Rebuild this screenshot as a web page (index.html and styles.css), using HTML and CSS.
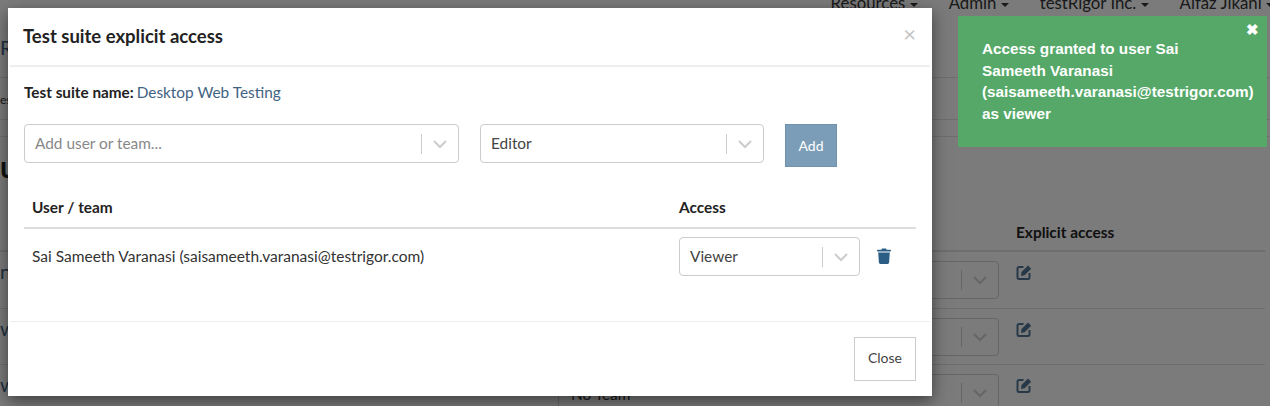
FILE: index.html
```html
<!DOCTYPE html>
<html>
<head>
  <title>Test suite explicit access</title>
  <link rel="stylesheet" href="styles.css">
</head>
<body>
  <div class="page">
    <nav class="top-nav">
      <span class="nav-item">Resources <i class="caret"></i></span>
      <span class="nav-item">Admin <i class="caret"></i></span>
      <span class="nav-item">testRigor Inc. <i class="caret"></i></span>
      <span class="nav-item nav-last">Alfaz Jikani <i class="caret"></i></span>
    </nav>
    <div class="page-link-row">R</div>
    <div class="page-tab-row">es</div>
    <div class="page-gap-row"></div>
    <h2 class="page-title">u</h2>
    <div class="page-table">
      <div class="page-head">
        <span></span>
        <span></span>
        <span>Explicit access</span>
      </div>
      <div class="page-row">
        <span class="page-name">n</span>
        <div class="page-select"><span class="sep"></span><svg class="chev" viewBox="0 0 20 20"><path d="M4 7l6 6 6-6"/></svg></div>
        <svg class="edit-icon" viewBox="0 0 16 16"><path d="M7.500 3H3a1.500 1.500 0 0 0-1.500 1.500v9A1.500 1.500 0 0 0 3 15h9a1.500 1.500 0 0 0 1.500-1.500V9"/><path class="fill" d="M5.500 8L12 1.500 15.200 4.700 8.700 11.200 5 12z"/></svg>
      </div>
      <div class="page-row">
        <span class="page-name">w</span>
        <div class="page-select"><span class="sep"></span><svg class="chev" viewBox="0 0 20 20"><path d="M4 7l6 6 6-6"/></svg></div>
        <svg class="edit-icon" viewBox="0 0 16 16"><path d="M7.500 3H3a1.500 1.500 0 0 0-1.500 1.500v9A1.500 1.500 0 0 0 3 15h9a1.500 1.500 0 0 0 1.500-1.500V9"/><path class="fill" d="M5.500 8L12 1.500 15.200 4.700 8.700 11.200 5 12z"/></svg>
      </div>
      <div class="page-row">
        <span class="page-name">w</span>
        <div class="page-select page-select-text"><span class="team-name">No Team</span><span class="sep"></span><svg class="chev" viewBox="0 0 20 20"><path d="M4 7l6 6 6-6"/></svg></div>
        <svg class="edit-icon" viewBox="0 0 16 16"><path d="M7.500 3H3a1.500 1.500 0 0 0-1.500 1.500v9A1.500 1.500 0 0 0 3 15h9a1.500 1.500 0 0 0 1.500-1.500V9"/><path class="fill" d="M5.500 8L12 1.500 15.200 4.700 8.700 11.200 5 12z"/></svg>
      </div>
    </div>
  </div>

  <div class="backdrop"></div>

  <div class="modal">
    <div class="modal-header">
      <h4>Test suite explicit access</h4>
      <span class="modal-close">&times;</span>
    </div>
    <div class="modal-body">
      <p class="suite-name"><b>Test suite name:</b> <a>Desktop Web Testing</a></p>
      <div class="add-row">
        <div class="select select-user">
          <span class="placeholder">Add user or team...</span>
          <span class="sep"></span>
          <svg class="chev" viewBox="0 0 20 20"><path d="M4 7l6 6 6-6"/></svg>
        </div>
        <div class="select select-role">
          <span>Editor</span>
          <span class="sep"></span>
          <svg class="chev" viewBox="0 0 20 20"><path d="M4 7l6 6 6-6"/></svg>
        </div>
        <button class="btn-add">Add</button>
      </div>
      <div class="access-head">
        <span class="col-user">User / team</span>
        <span>Access</span>
      </div>
      <div class="access-row">
        <span class="col-user">Sai Sameeth Varanasi (saisameeth.varanasi@testrigor.com)</span>
        <div class="select select-access">
          <span>Viewer</span>
          <span class="sep"></span>
          <svg class="chev" viewBox="0 0 20 20"><path d="M4 7l6 6 6-6"/></svg>
        </div>
        <svg class="trash" viewBox="0 0 14 16"><path d="M5 .5h4l.6 1.300H13.200a.8.8 0 0 1 0 1.700H.8a.8.8 0 0 1 0-1.700h3.600z"/><path d="M1.200 4.500h11.600l-.7 10a1.500 1.500 0 0 1-1.500 1.400H3.400a1.500 1.500 0 0 1-1.500-1.400z"/></svg>
      </div>
    </div>
    <div class="modal-footer">
      <button class="btn-close">Close</button>
    </div>
  </div>

  <div class="toast">
    <span class="toast-close">&#10006;</span>
    Access granted to user Sai<br>
    Sameeth Varanasi<br>
    (saisameeth.varanasi@testrigor.com)<br>
    as viewer
  </div>
</body>
</html>
```

FILE: styles.css
```css
html, body {
  margin: 0;
  height: 406px;
  overflow: hidden;
}

body {
  background-color: #f6f6f6;
  font-family: Lato, sans-serif;
  font-size: 15.4px;
  color: #333;
}

/* page behind the dialog */
.top-nav {
  display: flex;
  justify-content: flex-end;
  gap: 31px;
  height: 12px;
  margin-top: -7px;
  margin-right: -4px;
  font-size: 16.800px;
  line-height: 20px;
  white-space: nowrap;
}

.caret {
  display: inline-block;
  border-top: 4px solid #333;
  border-left: 4px solid transparent;
  border-right: 4px solid transparent;
  vertical-align: middle;
}

.page-link-row {
  height: 73px;
  box-sizing: border-box;
  padding-top: 30px;
  font-size: 20px;
  line-height: 24px;
  color: #3f6382;
  border-bottom: 1px solid #ddd;
}

.page-tab-row {
  height: 42px;
  box-sizing: border-box;
  padding-top: 12px;
  font-size: 12px;
  line-height: 20px;
  border-bottom: 1px solid #ddd;
}

.page-gap-row {
  height: 17px;
  box-sizing: border-box;
  border-bottom: 1px solid #ddd;
}

.page-title {
  margin: 11px 0 0;
  font-size: 30px;
  line-height: 36px;
  color: #222;
}

.page-table {
  margin: 37px 5px 0 0;
}

.page-head {
  display: grid;
  grid-template-columns: 558px 458px 1fr;
  box-sizing: border-box;
  height: 31px;
  font-weight: 700;
  line-height: 22px;
  color: #222;
  border-bottom: 2px solid #ddd;
}

.page-row {
  display: grid;
  grid-template-columns: 558px 441px 1fr;
  column-gap: 0;
  align-items: start;
  height: 56.500px;
  box-sizing: border-box;
  border-bottom: 1px solid #ddd;
}

.page-name {
  padding-top: 7px;
  font-size: 20px;
  line-height: 24px;
  color: #3f6382;
}

.page-select {
  display: flex;
  align-items: center;
  justify-content: flex-end;
  box-sizing: border-box;
  height: 38px;
  margin-top: 9px;
  border: 1px solid #ccc;
  border-radius: 4px;
}

.team-name {
  flex: 1;
  align-self: flex-start;
  padding: 8px 0 0 12px;
  font-size: 15.400px;
  line-height: 22px;
}

.edit-icon {
  width: 16px;
  height: 16px;
  margin: 12px 0 0 17px;
  fill: none;
  stroke: #4f7390;
  stroke-width: 2;
}

.edit-icon .fill {
  fill: #4f7390;
  stroke: none;
}

.backdrop {
  position: absolute;
  inset: 0;
  background-color: rgba(0, 0, 0, 0.5);
}

/* dialog */
.modal {
  position: absolute;
  left: 8px;
  top: 8px;
  width: 924px;
  height: 388px;
  display: flex;
  flex-direction: column;
  background-color: #fff;
  box-shadow: 0 5px 15px rgba(0, 0, 0, 0.5);
}

.modal-header {
  display: flex;
  justify-content: space-between;
  box-sizing: border-box;
  height: 59px;
  margin: 0 2px;
  padding: 17px 14px 0 13px;
  border-bottom: 2px solid #eee;
}

.modal-header h4 {
  margin: 0;
  font-size: 18.500px;
  line-height: 22px;
  font-weight: 700;
  color: #222;
}

.modal-close {
  font-size: 22px;
  line-height: 18px;
  color: #c4c4c4;
}

.modal-body {
  flex: 1;
  padding: 0 16px;
}

.suite-name {
  margin: 15px 0 0;
  line-height: 20px;
  color: #222;
}

.suite-name b {
  font-size: 15.300px;
}

.suite-name a {
  margin-left: -1px;
  color: #3f6382;
}

.add-row {
  display: flex;
  align-items: flex-start;
  margin-top: 22px;
}

.select {
  display: flex;
  align-items: center;
  box-sizing: border-box;
  height: 39px;
  padding-left: 10px;
  border: 1px solid #ccc;
  border-radius: 4px;
  color: #444;
}

.select > span:first-child {
  flex: 1;
  padding-bottom: 2px;
}

.select-user {
  width: 435px;
  margin-right: 21px;
}

.select-role {
  width: 284px;
  margin-right: 21px;
}

.placeholder {
  color: #888;
}

.sep {
  width: 1px;
  height: 20px;
  background-color: #ccc;
}

.chev {
  width: 20px;
  height: 20px;
  margin: 0 8px;
  fill: none;
  stroke: #ccc;
  stroke-width: 2;
}

.btn-add {
  box-sizing: border-box;
  width: 52px;
  height: 43px;
  padding: 0;
  border: 1px solid #7293ad;
  background-color: #7b9db7;
  color: #fff;
  font-family: Lato, sans-serif;
  font-size: 14px;
}

.access-head {
  display: flex;
  margin-top: 29px;
  padding-bottom: 9px;
  line-height: 22px;
  font-weight: 700;
  color: #222;
  border-bottom: 2px solid #ddd;
}

.col-user {
  width: 647px;
  padding-left: 8px;
}

.access-row {
  display: flex;
  align-items: flex-start;
  padding-top: 8px;
  color: #333;
}

.access-row .col-user {
  font-size: 15.500px;
  line-height: 39px;
}

.select-access {
  width: 181px;
  margin-right: 17px;
}

.trash {
  width: 14px;
  height: 16px;
  margin-top: 11px;
  fill: #2c5d85;
}

.modal-footer {
  display: flex;
  justify-content: flex-end;
  box-sizing: border-box;
  height: 75px;
  margin: 0 2px;
  padding: 15px 14px 0 0;
  border-top: 1px solid #eee;
}

.btn-close {
  box-sizing: border-box;
  width: 62px;
  height: 44px;
  padding: 0 0 3px;
  border: 1px solid #ccc;
  background-color: #fff;
  color: #444;
  font-family: Lato, sans-serif;
  font-size: 14px;
}

/* notification */
.toast {
  position: absolute;
  left: 958px;
  top: 16px;
  box-sizing: border-box;
  width: 309px;
  height: 131px;
  padding: 22px 8px 0 24px;
  background-color: #55a868;
  color: #fff;
  font-family: "Liberation Sans", Arial, sans-serif;
  font-size: 15.300px;
  line-height: 21.600px;
  font-weight: 700;
}

.toast-close {
  position: absolute;
  top: 6px;
  right: 8px;
  font-size: 15px;
  line-height: 16px;
}
```
